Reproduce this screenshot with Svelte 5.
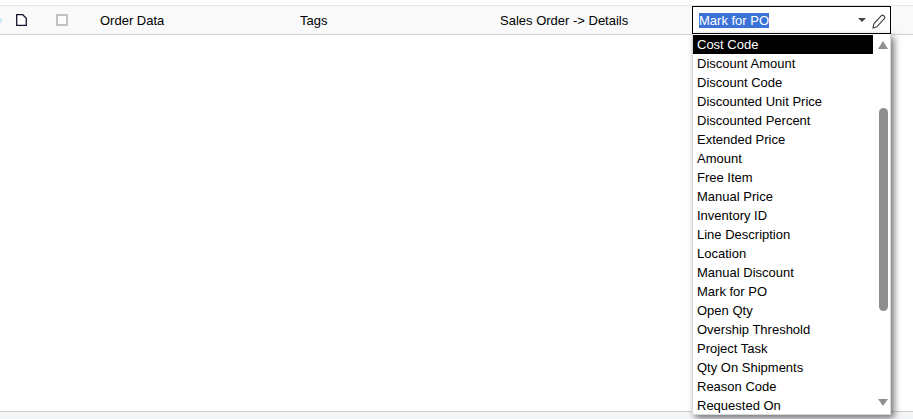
<script>
  const options = ["Cost Code","Discount Amount","Discount Code","Discounted Unit Price","Discounted Percent","Extended Price","Amount","Free Item","Manual Price","Inventory ID","Line Description","Location","Manual Discount","Mark for PO","Open Qty","Overship Threshold","Project Task","Qty On Shipments","Reason Code","Requested On"];
</script>

<div class="page">
  <div class="top-gap"></div>
  <div class="row">
    <div class="dot"></div>
    <div class="cell icon-cell file">
      <svg width="11" height="12" viewBox="0 0 11 12"><path d="M.7.7h6L10.3 4.3v7H.7z" fill="#fff" stroke="#1a1030" stroke-width="1.3"/></svg>
    </div>
    <div class="cell icon-cell check"><span class="box"></span></div>
    <div class="cell c1">Order Data</div>
    <div class="cell c2">Tags</div>
    <div class="cell c3">Sales Order -&gt; Details</div>
    <div class="combo">
      <div class="editor">
        <span class="sel">Mark for PO</span>
        <span class="caret"></span>
        <svg class="pen" width="14" height="15" viewBox="0 0 14 15"><path d="M1 14l.9-4.2L9.6 1.5a1.3 1.3 0 0 1 1.8 0l1.1 1.1a1.3 1.3 0 0 1 0 1.8L4.8 12.8z" fill="none" stroke="#3c3c3c" stroke-width="1.1"/></svg>
      </div>
      <div class="list">
        <div class="items">
          {#each options as o, i}
            <div class="item" class:active={i === 0}>{o}</div>
          {/each}
        </div>
        <div class="scroll">
          <span class="up"></span>
          <span class="track"><span class="thumb"></span></span>
          <span class="down"></span>
        </div>
      </div>
    </div>
  </div>
  <div class="body"></div>
  <div class="footer"></div>
</div>

<style>
  :global(body) { margin: 0; background: #fff; overflow: hidden; }
  .page { width: 913px; height: 419px; display: flex; flex-direction: column; font-family: "Liberation Sans", Arial, sans-serif; font-size: 13px; color: #000; }
  .top-gap { height: 5px; }
  .row { height: 28px; display: flex; align-items: center; background: #f9f9f9; border-top: 1px solid #e4e4e4; border-bottom: 1px solid #d2d2d2; position: relative; flex: none; }
  .dot { position: absolute; left: -3px; top: 12px; width: 5px; height: 5px; border-radius: 50%; background: #bfe6f2; }
  .cell { flex: none; }
  .icon-cell { display: flex; align-items: center; }
  .file { margin-left: 16px; width: 40px; }
  .check { width: 44px; }
  .box { width: 8px; height: 8px; border: 2px solid #c2c2c2; background: #fcfcfc; display: block; }
  .c1, .c2 { width: 200px; }
  .c3 { width: 192px; }
  .combo { position: absolute; left: 692px; top: 0; width: 199px; }
  .editor { height: 28px; box-sizing: border-box; border: 1px solid #000; background: #fff; display: flex; align-items: center; padding-left: 6px; position: relative; }
  .sel { background: #3a72d8; color: #fff; line-height: 15px; }
  .caret { position: absolute; left: 165px; top: 11px; width: 0; height: 0; border-left: 4px solid transparent; border-right: 4px solid transparent; border-top: 4px solid #444; }
  .pen { position: absolute; left: 179px; top: 7px; }
  .list { position: absolute; top: 28px; left: 0; width: 199px; height: 381px; box-sizing: border-box; background: #fff; border: 1px solid #d8d8d8; border-top: 0; box-shadow: 3px 3px 7px rgba(0,0,0,.55); display: flex; padding-top: 1px; overflow: hidden; }
  .items { width: 180px; flex: none; }
  .item { height: 19px; line-height: 19px; padding-left: 4px; white-space: nowrap; }
  .item.active { background: #000; color: #fff; }
  .scroll { flex: 1; display: flex; flex-direction: column; align-items: center; padding-top: 6px; padding-left: 3px; }
  .up { width: 0; height: 0; border-left: 5px solid transparent; border-right: 5px solid transparent; border-bottom: 8px solid #8f8f8f; flex: none; }
  .down { width: 0; height: 0; border-left: 5px solid transparent; border-right: 5px solid transparent; border-top: 7px solid #8f8f8f; flex: none; margin-bottom: 8px; }
  .track { flex: 1; display: flex; flex-direction: column; width: 9px; }
  .thumb { width: 9px; height: 203px; margin-top: 59px; border-radius: 5px; background: #8f8f8f; }
  .body { flex: 1; }
  .footer { height: 7px; background: #f4f5f7; border-top: 1px solid #cfcfcf; flex: none; }
</style>
